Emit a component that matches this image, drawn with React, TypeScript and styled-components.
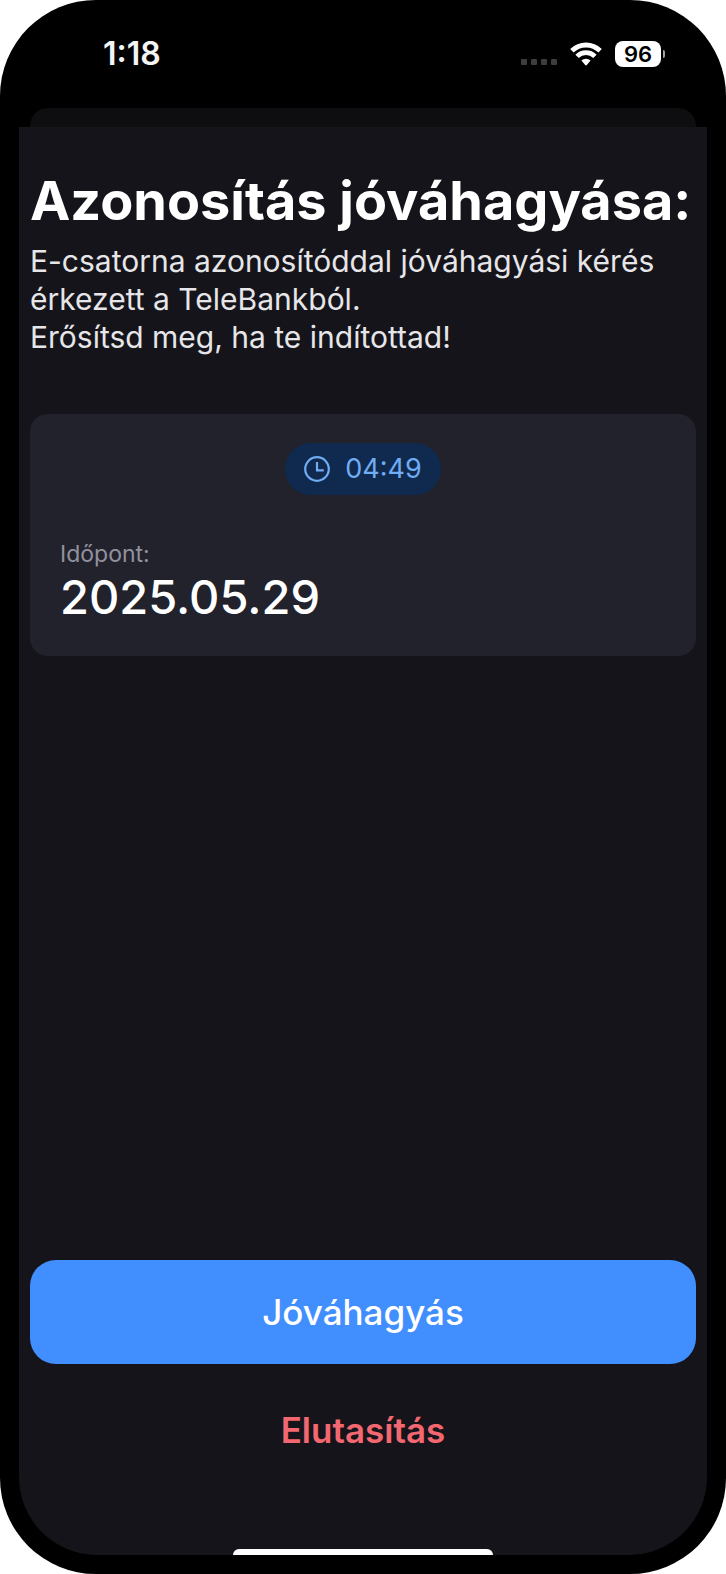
import React from 'react';
import styled, { createGlobalStyle } from 'styled-components';

const GlobalStyle = createGlobalStyle`
  *, *::before, *::after { box-sizing: border-box; }
  body {
    margin: 0;
    background: #ffffff;
    font-family: Inter, "Liberation Sans", sans-serif;
    color: #ffffff;
  }
  h1, p, dl, dd { margin: 0; }
`;

const Phone = styled.div`
  display: flex;
  flex-direction: column;
  min-height: 100vh;
  padding: 0 19px 19px;
  background: #000000;
  border-radius: 96px;
  overflow: hidden;
`;

const StatusBar = styled.header`
  display: flex;
  align-items: center;
  justify-content: space-between;
  height: 108px;
  padding: 0 42px 0 84px;
`;

const Clock = styled.time`
  font-size: 32px;
  font-weight: 600;
  line-height: 38px;
  color: #f4f4f4;
`;

const StatusIcons = styled.div`
  display: flex;
  align-items: center;
  gap: 13px;
`;

const SignalDots = styled.div`
  display: flex;
  gap: 4px;
  padding-top: 16px;
`;

const Dot = styled.span`
  width: 6px;
  height: 6px;
  border-radius: 1px;
  background: #3d3d3d;
`;

const Battery = styled.div`
  display: flex;
  align-items: center;
  gap: 2px;
`;

const BatteryLevel = styled.span`
  width: 46px;
  height: 26px;
  border-radius: 8px;
  background: #ffffff;
  color: #000000;
  font-size: 22px;
  font-weight: 600;
  line-height: 26px;
  text-align: center;
`;

const BatteryTip = styled.span`
  width: 2px;
  height: 8px;
  border-radius: 0 2px 2px 0;
  background: #a0a0a0;
`;

const SheetBehind = styled.div`
  height: 19px;
  margin: 0 11px;
  border-radius: 18px 18px 0 0;
  background: #0e0e11;
`;

const Sheet = styled.main`
  display: flex;
  flex: 1;
  flex-direction: column;
  padding: 42px 11px 0;
  border-radius: 0 0 78px 78px;
  background: #15141a;
`;

const Title = styled.h1`
  font-size: 54px;
  font-weight: 700;
  line-height: 64px;
  white-space: nowrap;
`;

const Description = styled.p`
  margin-top: 9px;
  font-size: 30px;
  font-weight: 400;
  line-height: 38px;
  color: #e6e6e9;
`;

const Card = styled.section`
  display: flex;
  flex-direction: column;
  margin-top: 58px;
  padding: 29px 30px 31px;
  border-radius: 18px;
  background: #22222d;
`;

const Timer = styled.div`
  display: flex;
  align-items: center;
  align-self: center;
  gap: 15px;
  height: 52px;
  padding: 0 19px;
  border-radius: 26px;
  background: #0f2a4e;
  color: #70acf3;
  font-size: 27px;
  line-height: 32px;
`;

const Details = styled.dl`
  margin-top: 44px;
`;

const DetailLabel = styled.dt`
  font-size: 23px;
  font-weight: 400;
  line-height: 30px;
  color: #92919e;
`;

const DetailValue = styled.dd`
  font-size: 47px;
  font-weight: 500;
  line-height: 56px;
`;

const Actions = styled.div`
  display: flex;
  flex-direction: column;
  gap: 14px;
  margin-top: auto;
  padding: 32px 0 67px;
`;

const ActionButton = styled.button<{ $primary?: boolean }>`
  height: 104px;
  padding: 0;
  border: 0;
  border-radius: 26px;
  background: ${({ $primary }) => ($primary ? '#418fff' : 'transparent')};
  color: ${({ $primary }) => ($primary ? '#ffffff' : '#f36770')};
  font-family: inherit;
  font-size: 35px;
  font-weight: ${({ $primary }) => ($primary ? 500 : 600)};
  line-height: 44px;
  cursor: pointer;
`;

const HomeIndicator = styled.div`
  align-self: center;
  width: 39%;
  height: 6px;
  border-radius: 6px 6px 0 0;
  background: #ffffff;
`;

const WifiIcon = () => (
  <svg width="32" height="24" viewBox="0 0 32 24" aria-hidden="true">
    <g fill="none" stroke="#ffffff" strokeWidth="4.8">
      <path d="M1.9 8.8a20 20 0 0 1 28.2 0" />
      <path d="M7.1 14.4a12.6 12.6 0 0 1 17.8 0" />
    </g>
    <path
      fill="#ffffff"
      d="M11.4 18.6a6.6 6.6 0 0 1 9.2 0L17 22.8a1.3 1.3 0 0 1-2 0Z"
    />
  </svg>
);

const ClockIcon = () => (
  <svg
    width="26"
    height="26"
    viewBox="0 0 26 26"
    fill="none"
    stroke="currentColor"
    strokeWidth="2.2"
    aria-hidden="true"
  >
    <circle cx="13" cy="13" r="11.8" />
    <path d="M13 6v8.3h6.8" />
  </svg>
);

export default function App() {
  return (
    <>
      <GlobalStyle />
      <Phone>
        <StatusBar>
          <Clock>1:18</Clock>
          <StatusIcons>
            <SignalDots>
              <Dot />
              <Dot />
              <Dot />
              <Dot />
            </SignalDots>
            <WifiIcon />
            <Battery>
              <BatteryLevel>96</BatteryLevel>
              <BatteryTip />
            </Battery>
          </StatusIcons>
        </StatusBar>
        <SheetBehind />
        <Sheet>
          <Title>Azonosítás jóváhagyása:</Title>
          <Description>
            E-csatorna azonosítóddal jóváhagyási kérés érkezett a TeleBankból.
            <br />
            Erősítsd meg, ha te indítottad!
          </Description>
          <Card>
            <Timer role="timer">
              <ClockIcon />
              <span>04:49</span>
            </Timer>
            <Details>
              <DetailLabel>Időpont:</DetailLabel>
              <DetailValue>2025.05.29</DetailValue>
            </Details>
          </Card>
          <Actions>
            <ActionButton type="button" $primary>
              Jóváhagyás
            </ActionButton>
            <ActionButton type="button">Elutasítás</ActionButton>
          </Actions>
          <HomeIndicator />
        </Sheet>
      </Phone>
    </>
  );
}
